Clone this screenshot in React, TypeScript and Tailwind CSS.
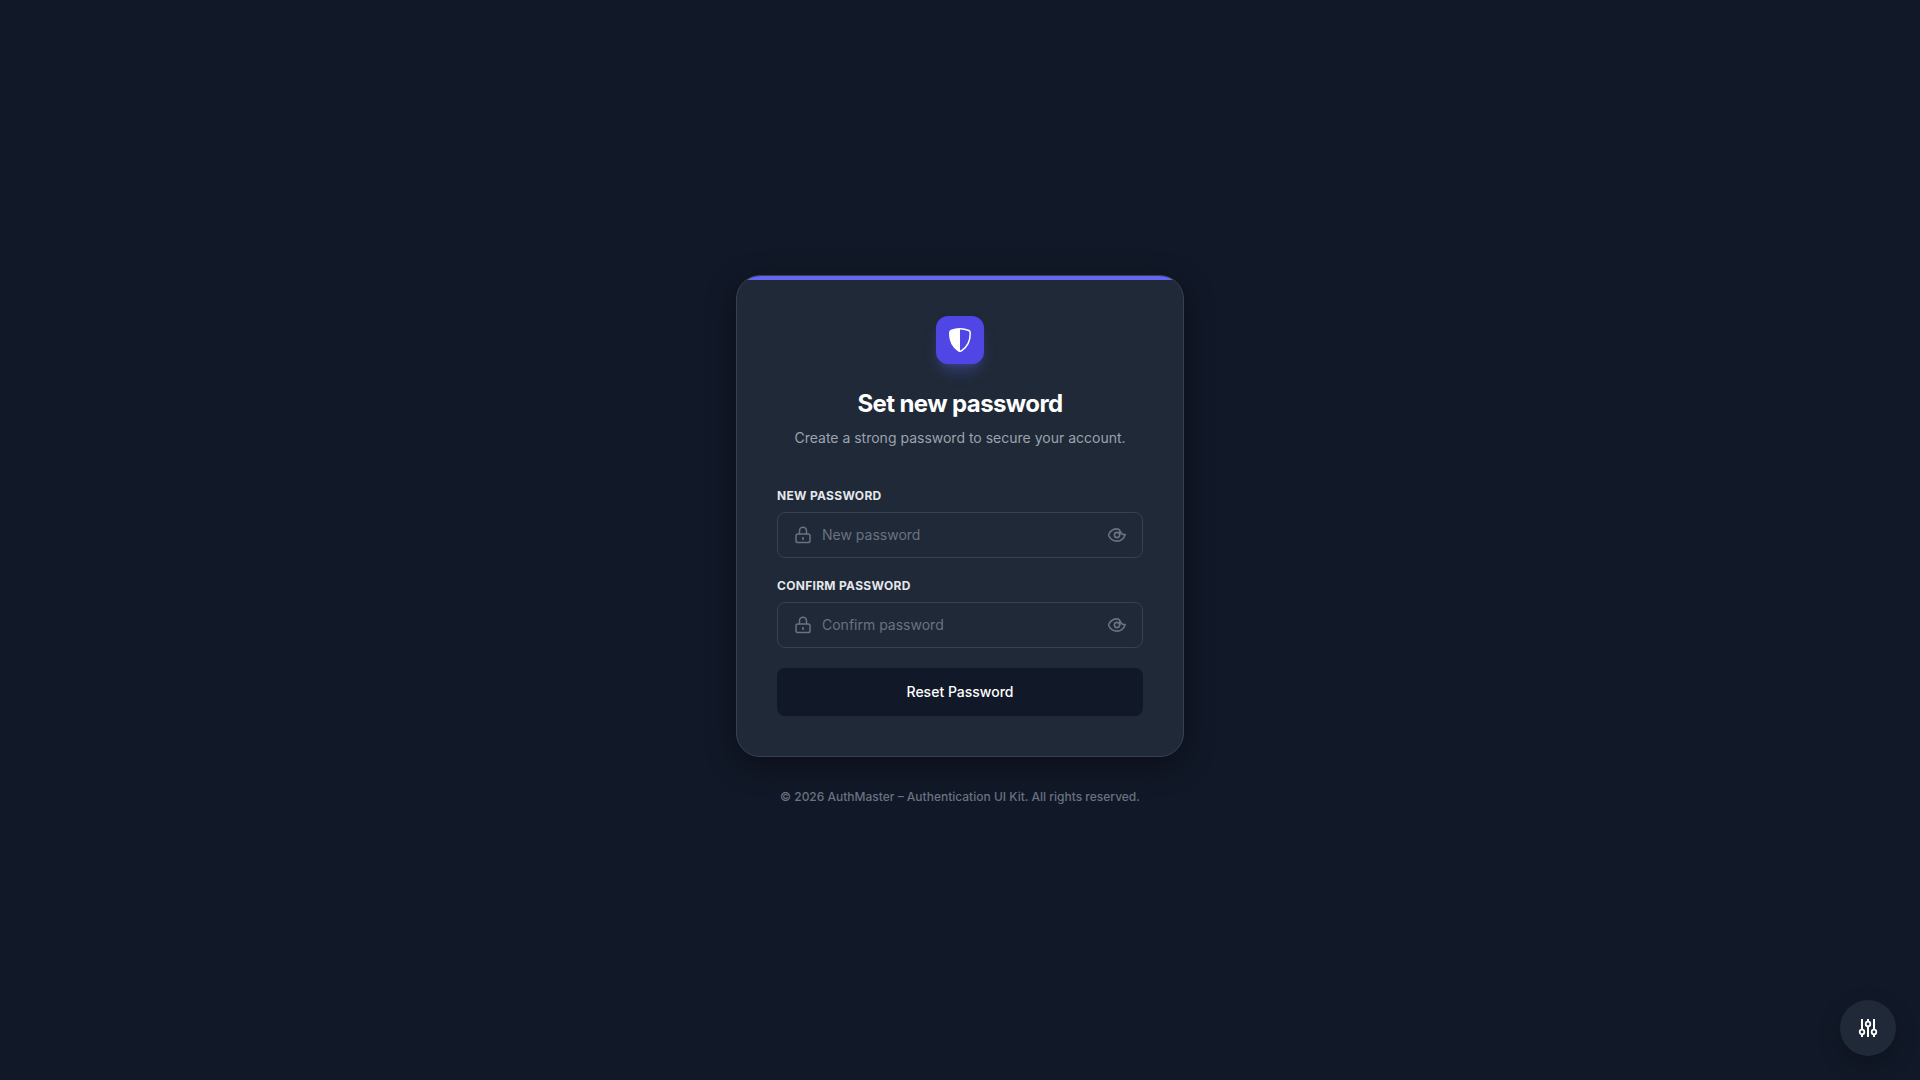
import { useState } from "react";

function ShieldIcon() {
  return (
    <svg viewBox="0 0 24 24" className="size-6" fill="none" aria-hidden="true">
      <path
        d="M12 .8C9.600 .8 5.600 1.500 3.200 2.500C2.200 2.950 1.900 3.500 1.850 4.600C1.500 11.500 4.500 18.500 10 22.400C11.200 23.300 12.800 23.300 14 22.400C19.500 18.500 22.500 11.500 22.150 4.600C22.100 3.500 21.800 2.950 20.800 2.500C18.400 1.500 14.400 .8 12 .8Z"
        stroke="currentColor"
        strokeWidth="1.500"
      />
      <path
        d="M12 .5C9.600 .5 5.500 1.200 3 2.300C2 2.800 1.500 3.500 1.500 4.600C1.200 11.500 4.500 18.500 10 22.600C10.600 23.100 11.300 23.300 12 23.300Z"
        fill="currentColor"
      />
    </svg>
  );
}

function LockIcon() {
  return (
    <svg viewBox="0 0 18 18" className="size-[18px]" fill="none" stroke="currentColor" strokeWidth="1.500" strokeLinecap="round" strokeLinejoin="round" aria-hidden="true">
      <rect x="2" y="8" width="14" height="8.500" rx="1.800" />
      <path d="M5.500 8V4.800a3.500 3.500 0 0 1 7 0V8" />
      <path d="M9 11v3" strokeWidth="1.600" strokeLinecap="butt" />
    </svg>
  );
}

function EyeIcon() {
  return (
    <svg viewBox="0 0 18 18" className="size-[18px]" fill="none" stroke="currentColor" strokeWidth="1.600" strokeLinecap="round" strokeLinejoin="round" aria-hidden="true">
      <path d="M10.500 3.200C6 1.900 2.400 4.900 1 7.900c-.4.800-.4 1.400 0 2.200 1.600 3 4.600 5 8 5 3.700 0 6.800-2.300 8.200-6.600-1.700.5-3.200-.3-4.200-1.700-.9-1.500-1.400-2.800-2.500-3.600" />
      <circle cx="9" cy="9" r="2.600" />
      <path d="M11.800 5.800v3" />
    </svg>
  );
}

function SlidersIcon() {
  return (
    <svg viewBox="0 0 20 20" className="size-5" fill="none" stroke="currentColor" strokeWidth="2" aria-hidden="true">
      <path d="M4 1v10.500M4 16.500V19M10 1v2.500M10 8.500V19M16 1v10.500M16 16.500V19" />
      <circle cx="4" cy="14" r="2.300" strokeWidth="1.800" />
      <circle cx="10" cy="6" r="2.300" strokeWidth="1.800" />
      <circle cx="16" cy="14" r="2.300" strokeWidth="1.800" />
    </svg>
  );
}

function PasswordField({ id, label, placeholder }: { id: string; label: string; placeholder: string }) {
  const [visible, setVisible] = useState(false);
  return (
    <div className="flex flex-col gap-2">
      <label htmlFor={id} className="text-xs font-bold tracking-wide text-[#e5e7eb] uppercase">
        {label}
      </label>
      <div className="flex items-center gap-2.5 rounded-lg border border-[#374151] px-4 text-[#6b7280] focus-within:border-[#6366f1]">
        <LockIcon />
        <input
          id={id}
          type={visible ? "text" : "password"}
          placeholder={placeholder}
          className="min-w-0 flex-1 bg-transparent py-3 text-sm text-white outline-none placeholder:text-[#6b7280]"
        />
        <button type="button" aria-label={`Show ${placeholder}`} onClick={() => setVisible(!visible)}>
          <EyeIcon />
        </button>
      </div>
    </div>
  );
}

export default function App() {
  return (
    <div className="flex min-h-screen flex-col items-center justify-center bg-[#111827] p-4 font-['Inter',sans-serif]">
      <main className="relative w-full max-w-md overflow-hidden rounded-3xl border border-[#374151] bg-[#1f2937] p-10 shadow-[0_8px_30px_rgba(0,0,0,0.4)]">
        <div className="absolute inset-x-0 top-0 h-1 bg-[#6366f1]" />
        <header className="mb-10 flex flex-col items-center text-center">
          <div className="mb-6 flex size-12 items-center justify-center rounded-xl bg-[#4f46e5] text-white shadow-lg shadow-[#6366f1]/30">
            <ShieldIcon />
          </div>
          <h1 className="mb-2 text-2xl font-bold tracking-tight text-white">Set new password</h1>
          <p className="text-sm text-[#9ca3af]">Create a strong password to secure your account.</p>
        </header>
        <form className="flex flex-col gap-5" onSubmit={(event) => event.preventDefault()}>
          <PasswordField id="new-password" label="New Password" placeholder="New password" />
          <PasswordField id="confirm-password" label="Confirm Password" placeholder="Confirm password" />
          <button type="submit" className="h-12 rounded-lg bg-[#111827] text-sm font-medium text-white">
            Reset Password
          </button>
        </form>
      </main>
      <footer className="mt-8 text-xs font-medium text-[#6b7280]">
        © 2026 AuthMaster – Authentication UI Kit. All rights reserved.
      </footer>
      <button
        type="button"
        aria-label="Customize"
        className="fixed right-6 bottom-6 flex size-14 items-center justify-center rounded-full bg-[#1f2937] text-white shadow-[0_8px_24px_rgba(0,0,0,0.2)]"
      >
        <SlidersIcon />
      </button>
    </div>
  );
}
